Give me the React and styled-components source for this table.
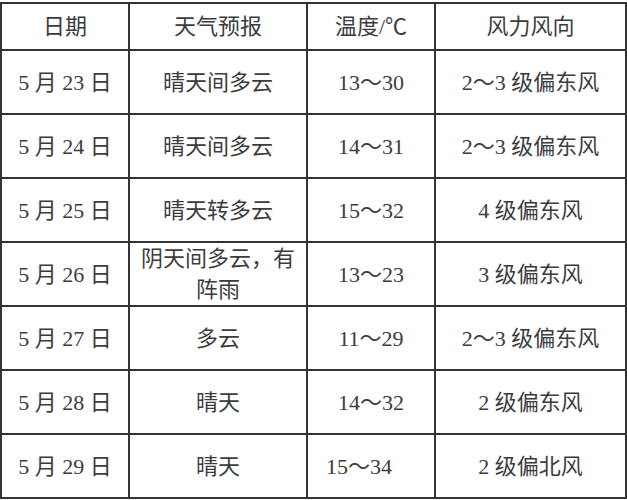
import React from 'react';
import styled, { createGlobalStyle } from 'styled-components';

const GlobalStyle = createGlobalStyle`
    html, body {
        margin: 0;
        padding: 0;
        background: #fff;
    }
`;

const Page = styled.div`
    padding: 2px 2px 0 0;
    background: #fff;
`;

const Table = styled.table`
    border-collapse: collapse;
    table-layout: fixed;
    width: 625px;
    font-family: 'Liberation Serif', 'Noto Sans CJK SC', serif;
    font-size: 22px;
    color: #3c3c3c;
`;

const Row = styled.tr`
    height: ${(p) => (p.header ? 47 : 64)}px;
`;

const Cell = styled.td`
    border: 2px solid #333;
    text-align: center;
    vertical-align: middle;
    padding: ${(p) => (p.shift ? '0 24px 0 0' : '0')};
    line-height: 31px;
    white-space: nowrap;
`;

const columns = [128, 178, 128, 191];

const header = ['日期', '天气预报', '温度/℃', '风力风向'];

const rows = [
    ['5 月 23 日', ['晴天间多云'], '13～30', '2～3 级偏东风'],
    ['5 月 24 日', ['晴天间多云'], '14～31', '2～3 级偏东风'],
    ['5 月 25 日', ['晴天转多云'], '15～32', '4 级偏东风'],
    ['5 月 26 日', ['阴天间多云，有', '阵雨'], '13～23', '3 级偏东风'],
    ['5 月 27 日', ['多云'], '11～29', '2～3 级偏东风'],
    ['5 月 28 日', ['晴天'], '14～32', '2 级偏东风'],
    ['5 月 29 日', ['晴天'], '15～34', '2 级偏北风', true]
];

const App = () => {
    return (
        <>
            <GlobalStyle />
            <Page>
                <Table>
                    <colgroup>
                        {columns.map((w, i) => (
                            <col key={i} style={{ width: w }} />
                        ))}
                    </colgroup>
                    <tbody>
                        <Row header>
                            {header.map((h) => (
                                <Cell key={h}>{h}</Cell>
                            ))}
                        </Row>
                        {rows.map(([date, weather, temp, wind, shift]) => (
                            <Row key={date}>
                                <Cell>{date}</Cell>
                                <Cell>
                                    {weather.map((line, i) => (
                                        <div key={i}>{line}</div>
                                    ))}
                                </Cell>
                                <Cell shift={shift}>{temp}</Cell>
                                <Cell>{wind}</Cell>
                            </Row>
                        ))}
                    </tbody>
                </Table>
            </Page>
        </>
    );
};

export default App;
